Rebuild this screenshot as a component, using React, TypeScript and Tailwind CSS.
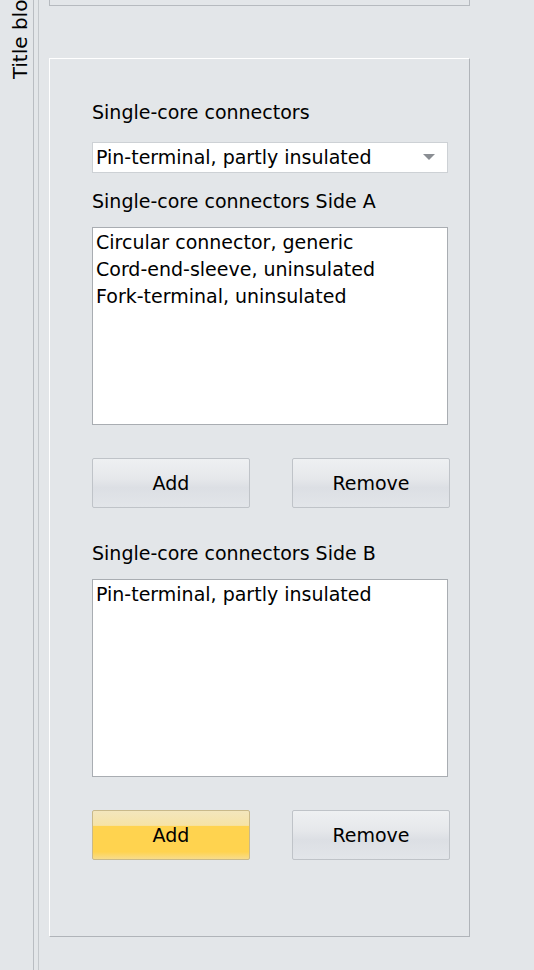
const font = { fontFamily: '"DejaVu Sans", "Liberation Sans", sans-serif' };

const Btn = ({ label, hot }: { label: string; hot?: boolean }) => (
    <button
        className={
            hot
                ? 'w-[158px] h-[50px] rounded-[2px] border border-[#c9b98a] bg-[linear-gradient(#f3e6bd_0%,#f6e3a6_30%,#ffd34f_32%,#ffd34f_85%,#f7dc8c_100%)] text-[19px] text-black'
                : 'w-[158px] h-[50px] rounded-[2px] border border-[#bfc3c8] bg-[linear-gradient(#eef0f2_0%,#e6e8eb_40%,#dcdfe4_60%,#e2e5e9_100%)] text-[19px] text-black'
        }
    >
        {label}
    </button>
);

const ListBox = ({ items }: { items: string[] }) => (
    <div className="w-[356px] h-[198px] bg-white border border-[#a9adb2] pl-[3px] pt-[1px]">
        {items.map((it) => (
            <div key={it} className="h-[27px] leading-[27px] text-[19px] text-black">
                {it}
            </div>
        ))}
    </div>
);

export default function App() {
    return (
        <div className="flex h-[970px] w-[534px] overflow-hidden bg-[#e3e6e9]" style={font}>
            {/* side tab */}
            <div className="w-[34px] shrink-0 border-r border-[#b9bdc2]">
                <div className="h-[79px] overflow-hidden flex flex-col justify-end items-center pl-[6px]">
                    <div className="shrink-0 [writing-mode:vertical-rl] rotate-180 text-[20px] text-black whitespace-nowrap leading-[22px]">
                        Title block
                    </div>
                </div>
            </div>
            <div className="w-[5px] shrink-0 border-r border-[#c4c8cc]" />

            {/* main area */}
            <div className="flex-1 flex flex-col pl-[10px]">
                <div className="w-[421px] h-[6px] border-x border-b border-[#b6babf]" />
                <div className="mt-[52px] w-[421px] h-[879px] border-t border-l border-white border-r border-b border-r-[#b0b4b9] border-b-[#b0b4b9] pl-[42px] pt-[36px]">
                    <div className="h-[34px] text-[19px] text-black leading-[34px]">Single-core connectors</div>
                    <div className="mt-[13px] w-[356px] h-[31px] bg-white border border-[#cdd1d5] flex items-center justify-between pl-[3px] pr-[12px]">
                        <span className="text-[19px] text-black">Pin-terminal, partly insulated</span>
                        <svg width="12" height="7" viewBox="0 0 12 7">
                            <path d="M0 0 L12 0 L6 6 Z" fill="#8a8e93" />
                        </svg>
                    </div>
                    <div className="mt-[15px] h-[26px] leading-[26px] text-[19px] text-black">
                        Single-core connectors Side A
                    </div>
                    <div className="mt-[13px]">
                        <ListBox
                            items={[
                                'Circular connector, generic',
                                'Cord-end-sleeve, uninsulated',
                                'Fork-terminal, uninsulated',
                            ]}
                        />
                    </div>
                    <div className="mt-[33px] flex gap-[42px]">
                        <Btn label="Add" />
                        <Btn label="Remove" />
                    </div>
                    <div className="mt-[32px] h-[26px] leading-[26px] text-[19px] text-black">
                        Single-core connectors Side B
                    </div>
                    <div className="mt-[13px]">
                        <ListBox items={['Pin-terminal, partly insulated']} />
                    </div>
                    <div className="mt-[33px] flex gap-[42px]">
                        <Btn label="Add" hot />
                        <Btn label="Remove" />
                    </div>
                </div>
            </div>
        </div>
    );
}
